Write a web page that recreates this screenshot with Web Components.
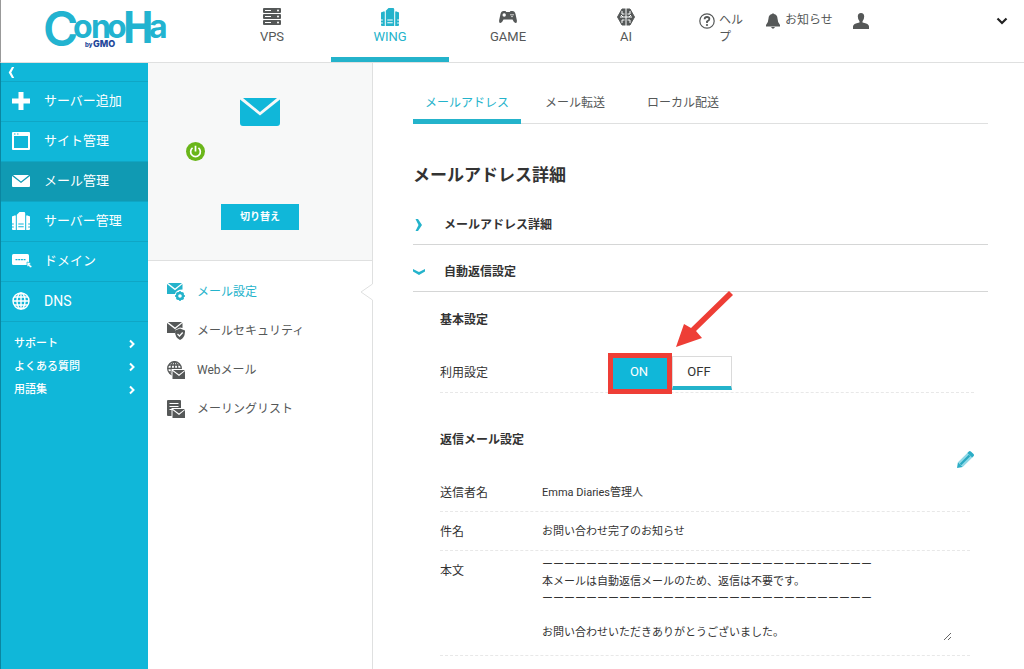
<!DOCTYPE html>
<html lang="ja">
<head>
<meta charset="utf-8">
<meta name="viewport" content="width=device-width, initial-scale=1">
<title>メールアドレス詳細 | ConoHa</title>
<style>
  html, body { margin: 0; }
  body {
    font-family: Roboto, "Noto Sans CJK JP", sans-serif;
    font-size: 12px;
    line-height: 16px;
    color: #333;
    background: #fff;
    --teal: #10b7d9;
    --teal-line: #24b3cb;
    --gray: #555858;
    --line: #dfe0e0;
  }
</style>
</head>
<body>
<conoha-app></conoha-app>
<script>
const ICONS = {
  vps: ['0 0 18 18', '<g fill="currentColor"><rect width="18" height="5" rx="1"/><rect y="6" width="18" height="5" rx="1"/><rect y="12" width="18" height="5" rx="1"/></g><g fill="#fff"><path d="M2 2h6v1H2zM2 8h6v1H2zM2 14h6v1H2z"/><circle cx="15" cy="2.500" r="1"/><circle cx="15" cy="8.500" r="1"/><circle cx="15" cy="14.500" r="1"/></g>'],
  wing: ['0 0 18 18', '<path fill="currentColor" fill-rule="evenodd" d="M7.500 0H12q1.200 0 1.200 1.200V18H4.800V2.700zM6.300 11.500v1h5.400v-1zM6.300 14.200v1h5.400v-1z"/><path fill="currentColor" d="M3.800 3.500V18H1q-1 0-1-1v-1.500h1.800v-1H0v-2h1.800v-1H0V5q0-1 1-1h.8v-.5zM14.200 3.500h2V4h.8q1 0 1 1v6.500h-1.800v1H18v2h-1.800v1H18V17q0 1-1 1h-2.800z"/>'],
  game: ['0 0 18 14', '<path fill="currentColor" d="M4.500 1h2l.7 1h3.600l.7-1h2q2.300 0 3 3l1.300 6q.5 3-1.300 3-1.500 0-3-3.500h-9Q3 13 1.500 13-.3 13 .2 10l1.300-6q.7-3 3-3z"/><circle cx="5.200" cy="5" r="1.700" fill="#fff"/><circle cx="12" cy="4.700" r=".7" fill="#fff"/><circle cx="14" cy="4.700" r=".7" fill="#fff"/><circle cx="13" cy="6.500" r=".7" fill="#fff"/>'],
  ai: ['0 0 18 18', '<path fill="currentColor" d="M5 1h8l4.500 8-4.500 8H5L.5 9z" stroke="currentColor" stroke-linejoin="round"/><path fill="none" stroke="#fff" d="M9 0v18M3 9h12M5 3v3h2.500M13 3v3h-2.500M5 15v-3h2.500M13 15v-3h-2.500M6 9l-2-2M12 9l2-2"/>'],
  help: ['0 0 16 16', '<circle cx="8" cy="8" r="7.200" fill="none" stroke="currentColor" stroke-width="1.200"/><path fill="none" stroke="currentColor" stroke-width="1.800" d="M5.600 6.200Q5.700 4 8 4t2.400 2Q10.400 7.200 8 8.500V10"/><circle cx="8" cy="12" r="1.100" fill="currentColor"/>'],
  bell: ['0 0 16 16', '<path fill="currentColor" d="M7 1q1-1.500 2 0 3.300.8 3.500 4.500.2 4.500 2.500 6.500v1.500H1V12q2.300-2 2.500-6.500Q3.700 1.800 7 1zM6 14h4q-2 3.500-4 0z"/>'],
  user: ['0 0 16 16', '<path fill="currentColor" d="M8 0q3.200 0 3.200 3.600 0 3-1.700 4.700v1.300q6.500 1 6.500 4V16H0v-2.400q0-3 6.500-4V8.300Q4.800 6.600 4.800 3.600 4.800 0 8 0z"/>'],
  down: ['0 0 12 8', '<path fill="none" stroke="currentColor" stroke-width="2.200" d="M1.500 1.500 6 6l4.500-4.500"/>'],
  right: ['0 0 8 12', '<path fill="none" stroke="currentColor" stroke-width="2" d="M2 2.500l3.500 3.500L2 9.500"/>'],
  angleL: ['0 0 8 12', '<path fill="currentColor" d="M5 0H7.500L4.300 6l3.200 6H5L1.500 6z"/>'],
  angleR: ['0 0 12 12', '<path fill="currentColor" d="M2.500 0H5l4 6-4 6H2.500l3-6z"/>'],
  angleD: ['0 0 12 12', '<path fill="currentColor" d="M0 3v2.500L6 9l6-3.500V3L6 6z"/>'],
  plus: ['0 0 18 18', '<path fill="currentColor" d="M6.500 0h5v6.500H18v5h-6.500V18h-5v-6.500H0v-5h6.500z"/>'],
  site: ['0 0 18 18', '<path fill="currentColor" fill-rule="evenodd" d="M1 0h16q1 0 1 1v16q0 1-1 1H1q-1 0-1-1V1q0-1 1-1zM2 4v12h14V4z"/><path fill="#10b7d9" d="M2 1.500h1.500v1H2zM5 1.500h1.500v1H5z"/>'],
  mail: ['0 0 18 12', '<path fill="currentColor" d="M1 0h16L9 6.500zM0 1l9 7 9-7v10q0 1-1 1H1q-1 0-1-1z"/>'],
  mailL: ['0 0 40 28', '<path fill="currentColor" d="M3 0h34L20 14zM0 1.500l20 16 20-16V25q0 3-3 3H3q-3 0-3-3z"/>'],
  domain: ['0 0 20 14', '<rect width="17" height="11" rx="1.500" fill="currentColor"/><path stroke="#10b7d9" stroke-width="1.200" stroke-dasharray="2 .7" d="M3.500 5.700h10"/><path fill="currentColor" stroke="#10b7d9" stroke-width=".7" d="M15 8l4 1-1 1.500 2 2-1.500 1.500-2-2-1.500 1z"/>'],
  globe: ['0 0 18 18', '<g fill="none" stroke="currentColor" stroke-width="1.400"><circle cx="9" cy="9" r="8"/><ellipse cx="9" cy="9" rx="4" ry="8"/><path d="M9 1v16M1 9h16M2 5h14M2 13h14"/></g>'],
  mailGear: ['0 0 18 18', '<path fill="currentColor" d="M1 0h14L8 5.500zM0 1l8 6.300L15.500 1v5.500Q9 6.500 8 11H0z"/><circle cx="13" cy="13" r="3" fill="none" stroke="currentColor" stroke-width="2.400"/><path stroke="currentColor" stroke-width="2" stroke-dasharray="1.500 6.600" d="M13 8.200v9.600M8.200 13h9.600M9.600 9.600l6.800 6.800M16.400 9.600l-6.800 6.800"/>'],
  mailShield: ['0 0 18 18', '<path fill="currentColor" d="M1 0h14L8 5.500zM0 1l8 6.300L15.500 1v5L13 5.500 8 8v3H0z"/><path fill="currentColor" d="M13 6.500l5 2q.3 7-5 9.500-5.300-2.500-5-9.500z"/><path fill="none" stroke="#fff" stroke-width="1.300" d="M10.500 12l2 2 3.200-3.500"/>'],
  globeMail: ['0 0 18 18', '<g fill="none" stroke="currentColor" stroke-width="1.300"><circle cx="7.500" cy="7.500" r="6.800"/><ellipse cx="7.500" cy="7.500" rx="3.300" ry="6.800"/><path d="M7.500 1v13M1 7.500h13M2 4h11M2 11h5"/></g><path fill="#fff" d="M4.500 8H18v10H4.500z"/><path fill="currentColor" d="M6 9h12l-6 4.500zM5.500 10l6.500 5 6-5v8H5.500z"/>'],
  listMail: ['0 0 18 18', '<path fill="currentColor" d="M1 0h12q1 0 1 1v15H1q-1 0-1-1V1q0-1 1-1z"/><path stroke="#fff" d="M2.500 3.500h9M2.500 6.500h9M2.500 9.500h4"/><path fill="#fff" d="M4.500 8H18v10H4.500z"/><path fill="currentColor" d="M6 9h12l-6 4.500zM5.500 10l6.500 5 6-5v8H5.500z"/>'],
  power: ['0 0 18 18', '<circle cx="9" cy="9" r="9" fill="#6ab61a"/><path fill="none" stroke="#fff" stroke-width="1.600" d="M6.200 5.600a4.600 4.600 0 1 0 5.600 0M9 3.500v5.500"/>'],
  pencil: ['0 0 18 18', '<path fill="#8fd8e6" d="M1 12L11.500 1.500l5 5L6 17z"/><path fill="#2cadc6" d="M0 18l1-6 5 5zM11 2l1.500-1.500q1-1 2.200 0l2.800 2.800q1 1.200 0 2.200L16 7z"/><path stroke="#2aa9c2" stroke-width="2.400" d="M3.700 14.300l9.500-9.500"/>'],
  arrow: ['0 0 58 58', '<path fill="#ee3e36" d="M54 0l4 4-37 36 6 7L1 56 9 33l7 4z"/>'],
  notch: ['0 0 13 18', '<path fill="#fff" d="M13 0L1 9l12 9z"/><path fill="none" stroke="#dfe0e0" d="M12.500 0v1L1 9l11.500 8v1"/>']
};
const icon = (name, w, h = w) =>
  `<svg class="icon" viewBox="${ICONS[name][0]}" width="${w}" height="${h}" aria-hidden="true">${ICONS[name][1]}</svg>`;

const BASE = `
  *, *::before { box-sizing: border-box; }
  :host { display: block; }
  svg { display: block; flex: none; }
  a { color: inherit; text-decoration: none; }
  button { font: inherit; border: 0; padding: 0; background: none; color: inherit; cursor: pointer; }
  h1, h2, h3, p { margin: 0; font-size: inherit; }
`;

function define(name, css, html) {
  customElements.define(name, class extends HTMLElement {
    constructor() {
      super();
      const markup = typeof html === 'function' ? html(this) : html;
      this.attachShadow({ mode: 'open' }).innerHTML = `<style>${BASE}${css}</style>${markup}`;
    }
  });
}

define('conoha-logo', `
  a { display: block; padding-left: 43px; }
  svg { overflow: visible; }
`, `
  <a href="#" aria-label="ConoHa by GMO"><svg width="126" height="62" viewBox="0 0 126 62">
    <text font-family="Inter" font-weight="700" font-size="32" fill="#22b3d0"><tspan x="-1" y="46" font-size="48" font-weight="600">C</tspan><tspan x="29 47 63" y="38">ono</tspan><tspan x="78" y="43" font-size="43" font-family="Noto Sans CJK JP">H</tspan><tspan x="105" y="38">a</tspan></text>
    <text y="47" font-family="Inter" font-weight="800" font-size="9" fill="#23479a"><tspan x="41" font-size="6">by</tspan><tspan x="49">GMO</tspan></text>
  </svg></a>
`);

define('service-link', `
  :host { flex: 0 0 118px; display: flex; color: var(--gray); }
  a { flex: 1; display: flex; flex-direction: column; align-items: center; gap: 3px; padding-top: 8px; font-size: 13px; border-bottom: 5px solid transparent; }
  .pic { height: 18px; display: grid; place-items: center; }
  :host([current]) a { color: var(--teal-line); border-color: var(--teal-line); }
`, el => `<a href="#"><span class="pic">${icon(el.getAttribute('icon'), 18, el.getAttribute('icon') === 'game' ? 14 : 18)}</span><slot></slot></a>`);

define('app-header', `
  :host { border-bottom: 1px solid var(--line); border-left: 1px solid #999; color: var(--gray); }
  header { display: flex; height: 62px; }
  conoha-logo { flex: 0 0 212px; }
  nav { display: flex; }
  .tools { flex: 1; display: flex; align-items: flex-start; padding: 12px 16px 0 14px; line-height: 17px; }
  .tools a, .tools button { display: flex; gap: 4px; }
  .help { width: 44px; }
  .icon { margin-top: 1px; }
  .help { margin-right: 22px; }
  .news { margin-right: 20px; }
  .menu { margin-left: auto; padding-top: 4px; color: #222; }
`, `<header>
  <conoha-logo></conoha-logo>
  <nav aria-label="サービス">
    <service-link icon="vps">VPS</service-link>
    <service-link icon="wing" current>WING</service-link>
    <service-link icon="game">GAME</service-link>
    <service-link icon="ai">AI</service-link>
  </nav>
  <div class="tools">
    <a class="help" href="#">${icon('help', 16)}<span>ヘル<br>プ</span></a>
    <a class="news" href="#">${icon('bell', 16)}<span>お知らせ</span></a>
    <a href="#" aria-label="アカウント">${icon('user', 16)}</a>
    <button class="menu" aria-label="メニュー">${icon('down', 12, 8)}</button>
  </div>
</header>`);

define('side-item', `
  a { display: flex; align-items: center; gap: 13px; height: 40px; padding: 0 0 1px 11px; font-size: 13px; border-bottom: 1px solid #0fa6c5; }
  .pic { width: 19px; display: grid; }
  :host([current]) a { background: #109ab3; }
  :host([latin]) a { font-size: 14px; }
`, el => {
  const [w, h] = (el.getAttribute('size') || '18 18').split(' ');
  return `<a href="#"><span class="pic">${icon(el.getAttribute('icon'), w, h)}</span><slot></slot></a>`;
});

define('side-bar', `
  :host { background: var(--teal); color: #fff; border-left: 1px solid #0b86a0; }
  .fold { display: flex; align-items: center; width: 100%; height: 19px; padding-left: 6px; border-bottom: 1px solid #0fa6c5; }
  .more { display: grid; gap: 7px; padding: 14px 12px 0 13px; font-size: 11px; font-weight: 500; }
  .more a { display: flex; justify-content: space-between; align-items: center; }
`, `<nav aria-label="メインメニュー">
  <button class="fold" aria-label="閉じる">${icon('angleL', 8, 11)}</button>
  <side-item icon="plus">サーバー追加</side-item>
  <side-item icon="site">サイト管理</side-item>
  <side-item icon="mail" size="18 12" current>メール管理</side-item>
  <side-item icon="wing">サーバー管理</side-item>
  <side-item icon="domain" size="20 14">ドメイン</side-item>
  <side-item icon="globe" latin>DNS</side-item>
  <div class="more">
    <a href="#">サポート${icon('right', 8, 12)}</a>
    <a href="#">よくある質問${icon('right', 8, 12)}</a>
    <a href="#">用語集${icon('right', 8, 12)}</a>
  </div>
</nav>`);

define('menu-item', `
  :host { position: relative; color: var(--gray); }
  a { display: flex; align-items: center; gap: 12px; height: 39px; padding-left: 19px; }
  :host([current]) { color: var(--teal-line); }
  .notch { display: none; position: absolute; right: -1px; top: 11px; }
  :host([current]) .notch { display: block; }
`, el => `<a href="#">${icon(el.getAttribute('icon'), 18)}<slot></slot></a><span class="notch">${icon('notch', 13, 18)}</span>`);

define('mail-menu', `
  :host { border-right: 1px solid var(--line); }
  .server { display: grid; justify-items: center; padding: 35px 38px 30px; background: #f7f8f8; border-bottom: 1px solid var(--line); color: var(--teal); }
  .state { justify-self: start; margin: 16px 0 43px; }
  .switch { width: 78px; height: 26px; background: var(--teal); color: #fff; font-size: 10px; font-weight: 700; line-height: 24px; }
  nav { padding-top: 11px; }
`, `<section class="server" aria-label="メールサーバー">
  ${icon('mailL', 40, 28)}
  <span class="state" role="img" aria-label="稼働中">${icon('power', 19)}</span>
  <button class="switch">切り替え</button>
</section>
<nav aria-label="メールメニュー">
  <menu-item icon="mailGear" current>メール設定</menu-item>
  <menu-item icon="mailShield">メールセキュリティ</menu-item>
  <menu-item icon="globeMail">Webメール</menu-item>
  <menu-item icon="listMail">メーリングリスト</menu-item>
</nav>`);

define('page-tabs', `
  nav { display: flex; height: 60px; border-bottom: 1px solid var(--line); color: var(--gray); }
  a { padding: 31px 12px 0; margin-right: 18px; height: 60px; }
  [aria-current] { color: var(--teal-line); border-bottom: 5px solid var(--teal-line); margin-right: 12px; }
`, `<nav aria-label="メール設定">
  <a href="#" aria-current="page">メールアドレス</a>
  <a href="#">メール転送</a>
  <a href="#">ローカル配送</a>
</nav>`);

define('fold-section', `
  h2 { border-bottom: 1px solid #d5d6d6; }
  button { display: flex; align-items: center; gap: 19px; width: 100%; height: 46px; padding-top: 8px; font-weight: 700; }
  .icon { color: var(--teal-line); }
  .body { padding: 20px 14px 0 27px; }
`, el => {
  const open = el.hasAttribute('open');
  return `<h2><button aria-expanded="${open}">${icon(open ? 'angleD' : 'angleR', 12)}${el.getAttribute('heading')}</button></h2>${open ? '<div class="body"><slot></slot></div>' : ''}`;
});

define('on-off', `
  :host { position: relative; display: flex; }
  .group { display: flex; height: 34px; }
  input { position: absolute; opacity: 0; margin: 0; }
  label { display: grid; place-items: center; width: 60px; padding: 0 6px 0 0; font-size: 13px; border: 1px solid #dadada; border-bottom: 4px solid var(--teal-line); cursor: pointer; }
  label:has(:checked) { background: var(--teal); border-color: var(--teal); color: #fff; }
  .frame { position: absolute; left: -4px; top: -3px; width: 64px; height: 41px; border: 5px solid #ee3e36; pointer-events: none; }
  .arrow { position: absolute; left: 63px; top: -65px; pointer-events: none; }
`, `<div class="group" role="radiogroup" aria-label="利用設定">
  <label><input type="radio" name="use" checked>ON</label>
  <label><input type="radio" name="use">OFF</label>
</div>
<span class="frame"></span>
<span class="arrow">${icon('arrow', 58)}</span>`);

define('field-row', `
  .row { display: grid; grid-template-columns: 102px minmax(0, 1fr); min-height: 39px; border-bottom: 1px dashed #e8e8e8; }
  .name { padding-top: 12px; }
  .value { font-size: 11px; padding-top: 12px; }
  :host([wide]) .row { grid-template-columns: 172px minmax(0, 1fr); }
  :host([wide]) .value { padding: 3px 0 2px; }
  :host([multi]) .value { padding: 5px 0 14px; }
`, `<div class="row"><span class="name"><slot name="name"></slot></span><div class="value"><slot></slot></div></div>`);

define('mail-body', `
  textarea { display: block; width: calc(100% - 18px); height: 85px; margin: 0; padding: 0; border: 0; outline: 0; font: inherit; line-height: 17px; color: inherit; background: none; overflow: hidden; resize: both; }
`, `<textarea readonly aria-label="本文">ーーーーーーーーーーーーーーーーーーーーーーーーーーーーーー
本メールは自動返信メールのため、返信は不要です。
ーーーーーーーーーーーーーーーーーーーーーーーーーーーーーー

お問い合わせいただきありがとうございました。</textarea>`);

define('auto-reply', `
  h3 { font-weight: 700; }
  .use { padding-top: 25px; }
  .head { display: flex; justify-content: space-between; padding-top: 39px; }
  .edit { margin-top: 18px; height: 18px; }
  .rows { padding-right: 4px; margin-top: 5px; }
`, `<h3>基本設定</h3>
<div class="use"><field-row wide><span slot="name">利用設定</span><on-off></on-off></field-row></div>
<div class="head"><h3>返信メール設定</h3><button class="edit" aria-label="編集">${icon('pencil', 17)}</button></div>
<div class="rows">
  <field-row><span slot="name">送信者名</span>Emma Diaries管理人</field-row>
  <field-row><span slot="name">件名</span>お問い合わせ完了のお知らせ</field-row>
  <field-row multi><span slot="name">本文</span><mail-body></mail-body></field-row>
</div>`);

define('conoha-app', `
  :host { display: flex; flex-direction: column; min-height: 100vh; }
  .cols { flex: 1; display: grid; grid-template-columns: 148px 225px minmax(0, 1fr); }
  main { padding: 1px 36px 12px 40px; }
  h1 { font-size: 17px; line-height: 24px; padding: 39px 0 11px; font-weight: 700; }
`, `<app-header></app-header>
<div class="cols">
  <side-bar></side-bar>
  <mail-menu></mail-menu>
  <main>
    <page-tabs></page-tabs>
    <h1>メールアドレス詳細</h1>
    <fold-section heading="メールアドレス詳細"></fold-section>
    <fold-section heading="自動返信設定" open><auto-reply></auto-reply></fold-section>
  </main>
</div>`);
</script>
</body>
</html>
